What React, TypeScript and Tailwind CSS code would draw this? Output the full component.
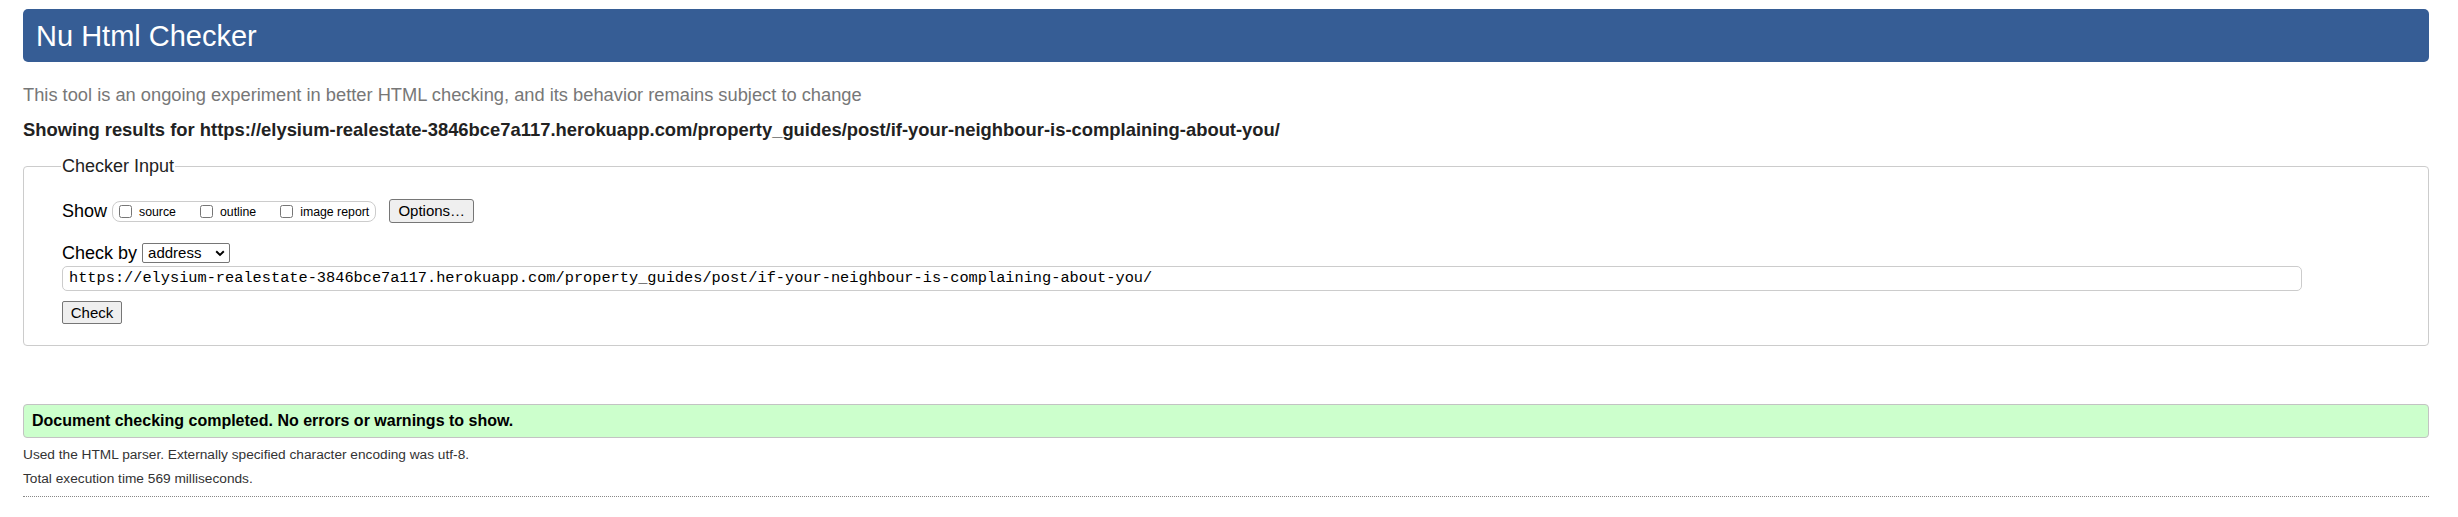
import React from "react";

export default function App() {
  const url =
    "https://elysium-realestate-3846bce7a117.herokuapp.com/property_guides/post/if-your-neighbour-is-complaining-about-you/";
  return (
    <div className="w-[2458px] h-[517px] bg-white pl-[23px] pr-[29px] pt-[9px] font-['Liberation_Sans',Arial,sans-serif] text-[#222] overflow-hidden">
      <header className="h-[53px] bg-[#365d95] rounded-[5px] px-[13px] flex items-center">
        <h1 className="text-[29px] text-white font-normal leading-[34px]">Nu Html Checker</h1>
      </header>

      <p className="mt-[21px] text-[18.3px] leading-[24px] text-[#777]">
        This tool is an ongoing experiment in better HTML checking, and its behavior remains subject to change
      </p>
      <p className="mt-[11px] text-[18.4px] leading-[24px] font-bold text-[#222]">
        Showing results for {url}
      </p>

      <fieldset className="mt-[13px] border border-[#ccc] rounded-[4px] px-[38px] pb-[21px]">
        <legend className="text-[18px] leading-[22px] px-[1px] -ml-[1px] text-[#222]">Checker Input</legend>

        <div className="mt-[22px] h-[24px] flex items-center text-[18px] text-black">
          <span className="leading-[24px]">Show</span>
          <div className="ml-[5px] h-[21px] border border-[#ccc] rounded-[8px] pl-[6px] pr-[6px] flex items-center text-[12.3px] gap-[24px]">
            <label className="flex items-center gap-[7px]">
              <input type="checkbox" className="m-0 w-[13px] h-[13px]" />
              <span className="leading-[14px] mt-[2px]">source</span>
            </label>
            <label className="flex items-center gap-[7px]">
              <input type="checkbox" className="m-0 w-[13px] h-[13px]" />
              <span className="leading-[14px] mt-[2px]">outline</span>
            </label>
            <label className="flex items-center gap-[7px]">
              <input type="checkbox" className="m-0 w-[13px] h-[13px]" />
              <span className="leading-[14px] mt-[2px]">image report</span>
            </label>
          </div>
          <button className="ml-[13px] w-[85px] h-[24px] bg-[#efefef] border border-[#767676] rounded-[3px] text-[15px] leading-[18px] text-black">
            Options…
          </button>
        </div>

        <div className="mt-[20px] h-[20px] flex items-center text-[18px] text-black">
          <span className="leading-[20px]">Check by</span>
          <div className="ml-[5px] w-[88px] h-[20px] border border-[#767676] rounded-[2px] pl-[5px] pr-[3px] flex items-center justify-between text-[15px] bg-white">
            <span className="leading-[18px]">address</span>
            <svg width="10" height="7" viewBox="0 0 10 7" className="mr-[1px]">
              <path d="M1.2 1.3 L5 5 L8.8 1.3" fill="none" stroke="#000" strokeWidth="1.9" />
            </svg>
          </div>
        </div>

        <div className="mt-[3px] w-[2240px] h-[25px] border border-[#ccc] rounded-[5px] pl-[6px] flex items-center font-['Liberation_Mono',monospace] text-[15.3px] text-black">
          {url}
        </div>

        <button className="mt-[10px] block w-[60px] h-[23px] bg-[#efefef] border border-[#767676] rounded-[2px] text-[15px] leading-[18px] text-black">
          Check
        </button>
      </fieldset>

      <div className="mt-[58px] h-[34px] bg-[#ccffcc] border border-[#c3c3c3] rounded-[4px] pl-[8px]">
        <p className="text-[16px] leading-[32px] font-bold text-black">
          Document checking completed. No errors or warnings to show.
        </p>
      </div>

      <p className="mt-[5px] text-[13.7px] leading-[24px] text-[#333]">
        Used the HTML parser. Externally specified character encoding was utf-8.
      </p>
      <p className="text-[13.7px] leading-[24px] text-[#333]">Total execution time 569 milliseconds.</p>
      <div className="mt-[5px] border-t border-dotted border-[#888]" />
    </div>
  );
}
